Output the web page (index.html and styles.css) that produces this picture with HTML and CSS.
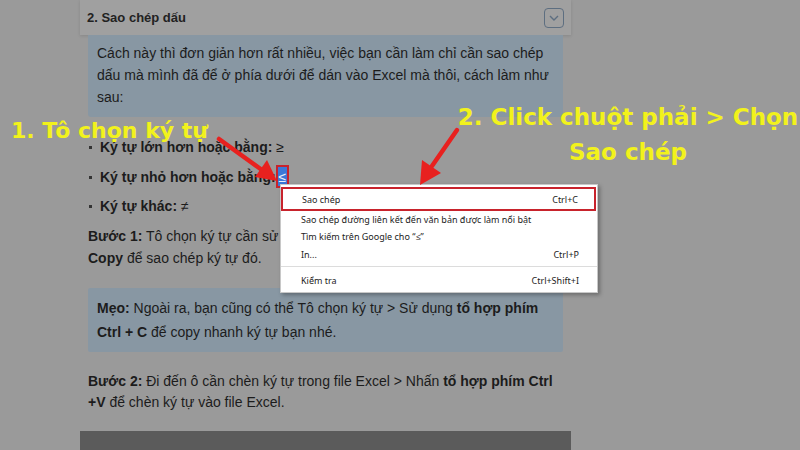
FILE: index.html
```html
<!DOCTYPE html>
<html lang="vi">
<head>
<meta charset="utf-8">
<title>Sao chép dấu</title>
<link rel="stylesheet" href="styles.css">
</head>
<body>
<div class="page">
  <div class="header">
    <span class="title">2. Sao chép dấu</span>
    <span class="toggle">
      <svg width="12" height="8" viewBox="0 0 12 8"><path d="M2 2 L6 6 L10 2" fill="none" stroke="#5d6e80" stroke-width="1.4"/></svg>
    </span>
  </div>
  <div class="content">
    <div class="note">Cách này thì đơn giản hơn rất nhiều, việc bạn cần làm chỉ cần sao chép dấu mà mình đã để ở phía dưới để dán vào Excel mà thôi, cách làm như sau:</div>
    <ul class="list">
      <li><b>Ký tự lớn hơn hoặc bằng:</b> ≥</li>
      <li><b>Ký tự nhỏ hơn hoặc bằng:</b> <span class="sel">≤</span></li>
      <li><b>Ký tự khác:</b> ≠</li>
    </ul>
    <p class="para"><b>Bước 1:</b> Tô chọn ký tự cần sử dụng &gt; Nhấn chuột phải &gt; Chọn<br><b>Copy</b> để sao chép ký tự đó.</p>
    <div class="tip"><b>Mẹo:</b> Ngoài ra, bạn cũng có thể Tô chọn ký tự &gt; Sử dụng <b>tổ hợp phím Ctrl + C</b> để copy nhanh ký tự bạn nhé.</div>
    <p class="para step2"><b>Bước 2:</b> Đi đến ô cần chèn ký tự trong file Excel &gt; Nhấn <b>tổ hợp phím Ctrl +V</b> để chèn ký tự vào file Excel.</p>
  </div>
  <div class="dark"></div>
</div>

<div class="menu">
  <div class="item first"><span>Sao chép</span><span>Ctrl+C</span></div>
  <div class="item second"><span>Sao chép đường liên kết đến văn bản được làm nổi bật</span></div>
  <div class="item"><span>Tìm kiếm trên Google cho “≤”</span></div>
  <div class="item"><span>In...</span><span>Ctrl+P</span></div>
  <div class="sep"></div>
  <div class="item"><span>Kiểm tra</span><span>Ctrl+Shift+I</span></div>
</div>

<div class="anno anno1">1. Tô chọn ký tự</div>
<div class="anno anno2">2. Click chuột phải &gt; Chọn<br>Sao chép</div>

<svg class="arrows" width="800" height="450" viewBox="0 0 800 450">
  <line x1="219" y1="139" x2="262" y2="170" stroke="#e8211f" stroke-width="4.5" stroke-linecap="round"/>
  <polygon points="277,181 255,177 267,160" fill="#e8211f"/>
  <line x1="457" y1="130" x2="432" y2="166" stroke="#e8211f" stroke-width="4.5" stroke-linecap="round"/>
  <polygon points="420,185 422,160 441,173" fill="#e8211f"/>
</svg>
</body>
</html>
```
FILE: styles.css
```css
html, body {
  margin: 0;
  padding: 0;
}
body {
  width: 800px;
  height: 450px;
  overflow: hidden;
  background: #9a9a9a;
  font-family: "Liberation Sans", Arial, sans-serif;
  color: #1c1c1c;
  position: relative;
}
.page {
  width: 491px;
  margin-left: 80px;
}
.header {
  height: 35px;
  background: #a0a0a0;
  box-shadow: 0 1px 3px rgba(0, 0, 0, 0.12);
  display: flex;
  align-items: center;
  justify-content: space-between;
  padding: 0 7px;
  box-sizing: border-box;
}
.title {
  font-weight: bold;
  font-size: 13px;
  color: #222;
}
.toggle {
  width: 18px;
  height: 18px;
  border: 1.5px solid #5d6e80;
  border-radius: 4px;
  display: flex;
  align-items: center;
  justify-content: center;
  margin-top: 1px;
}
.content {
  padding: 0 8px;
}
.note {
  background: #8897a3;
  padding: 7px 12px 9px 9px;
  font-size: 14px;
  line-height: 22px;
  border-radius: 0 0 3px 3px;
}
.list {
  list-style: none;
  margin: 19px 0 0 0;
  padding: 0;
  font-size: 14px;
  line-height: 22px;
}
.list li {
  position: relative;
  padding-left: 12px;
  margin-bottom: 7.5px;
}
.list li::before {
  content: "";
  position: absolute;
  left: 1px;
  top: 10px;
  width: 3px;
  height: 3px;
  background: #333;
}
.sel {
  background: #3b78d8;
  color: #e8eef8;
  padding: 2px 1px 1px;
  margin-left: -2px;
  outline: 2px solid #c8232c;
}
.para {
  margin: 3px 0 0 0;
  font-size: 14px;
  line-height: 22px;
}
.tip {
  margin-top: 19px;
  background: #8897a3;
  padding: 8px 10px 8px 9px;
  font-size: 14px;
  line-height: 24px;
  border-radius: 2px;
}
.step2 {
  margin-top: 19px;
  line-height: 21px;
}
.dark {
  margin-top: 18px;
  height: 30px;
  background: #5b5b5b;
}
.menu {
  position: absolute;
  left: 280px;
  top: 184px;
  width: 318px;
  box-sizing: border-box;
  background: #fff;
  border: 1px solid #c8c8c8;
  box-shadow: 2px 2px 4px rgba(0, 0, 0, 0.3);
  padding: 2px 0 3px;
  font-family: "Noto Sans", "Open Sans", sans-serif;
  font-size: 9px;
  color: #222;
}
.item {
  height: 18px;
  display: flex;
  align-items: center;
  justify-content: space-between;
  padding: 0 18px 0 20px;
}
.item.first {
  height: 24px;
  border: 2px solid #c8232c;
  margin: 0 1px 0 0;
  padding: 0 16px 0 19px;
  box-sizing: border-box;
}
.item.second {
  height: 16px;
}
.sep {
  height: 1px;
  background: #dcdcdc;
  margin: 3px 0 4px;
}
.anno {
  position: absolute;
  font-family: "DejaVu Sans", Lato, sans-serif;
  font-weight: bold;
  color: #f2f21c;
}
.anno1 {
  left: 11px;
  top: 115px;
  font-size: 22px;
  line-height: 32px;
}
.anno2 {
  left: 450px;
  top: 100px;
  width: 356px;
  text-align: center;
  font-size: 23px;
  line-height: 35px;
}
.arrows {
  position: absolute;
  left: 0;
  top: 0;
  pointer-events: none;
}
```
